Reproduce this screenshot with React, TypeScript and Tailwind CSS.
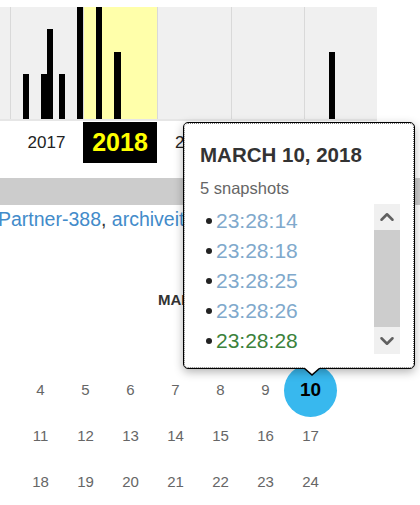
import { ChevronUp, ChevronDown } from "lucide-react";

const years = [
  { label: "", w: "w-[10px]", bars: [] as number[] },
  { label: "2017", w: "w-[73px]", bars: [0, 0, 45, 0, 0, 45, 90, 0, 45, 0, 0, 112] },
  { label: "2018", w: "w-[74px]", bars: [0, 0, 112, 0, 0, 67, 0, 0, 0, 0, 0, 0], active: true },
  { label: "2019", w: "w-[74px]", bars: [] },
  { label: "2020", w: "w-[73px]", bars: [] },
  { label: "2021", w: "w-[73px]", bars: [0, 0, 0, 0, 67, 0, 0, 0, 0, 0, 0, 0] },
];

const weeks = [
  [null, null, null, null, 1, 2, 3],
  [4, 5, 6, 7, 8, 9, 10],
  [11, 12, 13, 14, 15, 16, 17],
  [18, 19, 20, 21, 22, 23, 24],
];

const times = ["23:28:14", "23:28:18", "23:28:25", "23:28:26", "23:28:28"];

export default function App() {
  return (
    <div className="relative w-[420px] h-[505px] overflow-hidden bg-white pt-[7px] font-['Liberation_Sans',Arial,sans-serif]">
      {/* sparkline */}
      <div className="flex w-[377px] h-[112px] bg-[#f0f0f0]">
        {years.map((y, i) => (
          <div
            key={i}
            className={`${y.w} h-full grid grid-cols-12 items-end ${i > 0 ? "border-l border-[#d9d9d9]" : ""} ${y.active ? "bg-[#ffffaa]" : ""}`}
          >
            {y.bars.map((h, j) => (
              <div key={j} className="bg-black" style={{ height: h }} />
            ))}
          </div>
        ))}
      </div>
      <div className="w-[377px] h-[2px] bg-[#e6e6e6]" />

      {/* years */}
      <div className="flex mt-[1px] h-[41px]">
        {years.map((y, i) => (
          <div
            key={i}
            className={`${y.w} flex items-center justify-center ${y.active ? "bg-black text-[#ffff00] font-bold text-[25px]" : "text-[#222] text-[17px]"}`}
          >
            {y.label}
          </div>
        ))}
      </div>

      <div className="mt-[15px] h-[27px] w-full bg-[#cccccc]" />

      <div className="mt-[3px] -ml-[2px] whitespace-nowrap text-[19.5px] leading-[22px] text-[#333]">
        <span className="text-[#428bca]">Partner-388</span>, <span className="text-[#428bca]">archiveit</span>
      </div>

      {/* calendar */}
      <div className="mt-[61px] pl-[158px] text-[15px] leading-[18px] font-bold text-[#333]">MARCH</div>
      <div className="mt-[12px] pl-[18px]">
        {weeks.map((wk, r) => (
          <div key={r} className="flex h-[46px]">
            {wk.map((d, c) => (
              <div key={c} className="w-[45px] flex items-center justify-center text-[15px] text-[#666]">
                {d === 10 ? (
                  <span className="shrink-0 w-[53px] h-[53px] rounded-full bg-[#38b8ee] flex items-center justify-center text-black font-bold text-[19px]">
                    10
                  </span>
                ) : (
                  d
                )}
              </div>
            ))}
          </div>
        ))}
      </div>

      {/* snapshot popup */}
      <div className="absolute z-10 left-[183px] top-[122px] w-[232px] h-[247px] bg-white border border-black rounded-[5px] outline-1 outline-dotted -outline-offset-2 outline-[#777] shadow-[0_3px_10px_rgba(0,0,0,0.3)] pl-[16px] pr-[14px] pt-[21px]">
        <div className="text-[20.5px] leading-[22px] font-bold text-[#333]">MARCH 10, 2018</div>
        <div className="mt-[13px] text-[16.5px] leading-[18px] text-[#666]">5 snapshots</div>
        <div className="mt-[7px] flex h-[150px] overflow-hidden">
          <ul className="flex-1 pt-[2px]">
            {times.map((t, i) => (
              <li key={t} className="h-[30px] flex items-center text-[21px]">
                <span className="w-[6px] h-[6px] rounded-full bg-[#222] ml-[6px] mr-[4px]" />
                <span className={i === 4 ? "text-[#3b823b]" : "text-[#80a9cc]"}>{t}</span>
              </li>
            ))}
          </ul>
          <div className="w-[26px] flex flex-col">
            <div className="h-[26px] bg-[#f0f0f0] flex items-center justify-center text-[#606060]">
              <ChevronUp size={22} strokeWidth={2.8} />
            </div>
            <div className="flex-1 bg-[#cdcdcd]" />
            <div className="h-[27px] bg-[#f0f0f0] flex items-center justify-center text-[#606060]">
              <ChevronDown size={22} strokeWidth={2.8} />
            </div>
          </div>
        </div>
        {/* arrow */}
        <div className="absolute left-[119px] top-full w-0 h-0 border-x-[9px] border-x-transparent border-t-[8px] border-t-black" />
        <div className="absolute left-[120px] top-[calc(100%-1px)] w-0 h-0 border-x-[8px] border-x-transparent border-t-[7px] border-t-white" />
      </div>
    </div>
  );
}
